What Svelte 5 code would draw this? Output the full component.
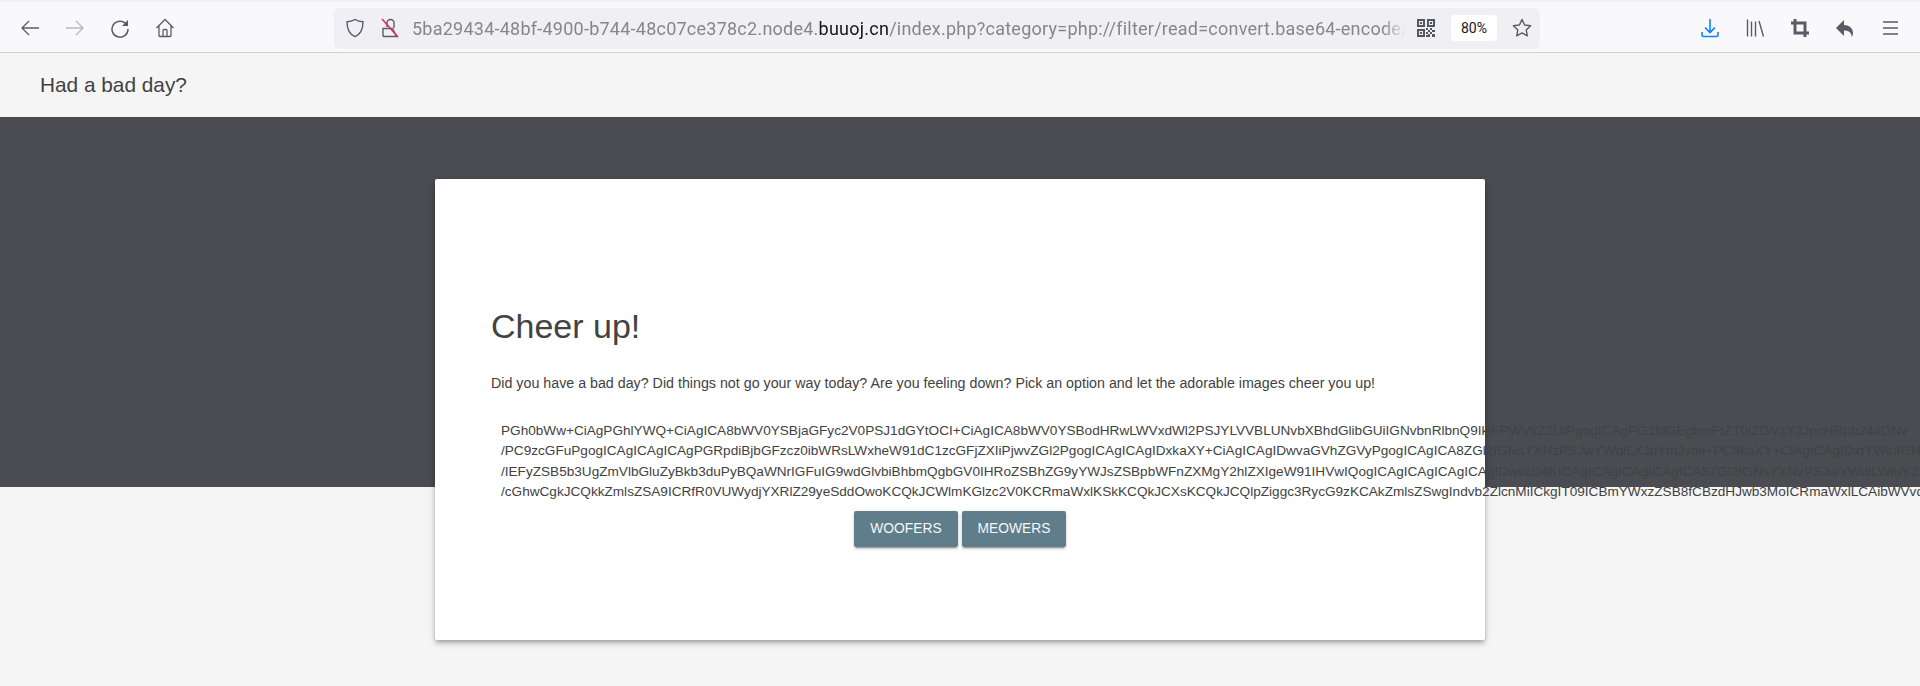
<script lang="ts">
	const urlHost = '5ba29434-48bf-4900-b744-48c07ce378c2.node4.';
	const urlDomain = 'buuoj.cn';
	const urlPath = '/index.php?category=php://filter/read=convert.base64-encode/resource=index';

	// the dumped source, already broken the way the browser wrapped it
	const dump = [
		'PGh0bWw+CiAgPGhlYWQ+CiAgICA8bWV0YSBjaGFyc2V0PSJ1dGYtOCI+CiAgICA8bWV0YSBodHRwLWVxdWl2PSJYLVVBLUNvbXBhdGlibGUiIGNvbnRlbnQ9IklFPWVkZ2UiPgogICAgPG1ldGEgbmFtZT0iZGVzY3JpcHRpb24iIGNv',
		'/PC9zcGFuPgogICAgICAgICAgPGRpdiBjbGFzcz0ibWRsLWxheW91dC1zcGFjZXIiPjwvZGl2PgogICAgICAgIDxkaXY+CiAgICAgIDwvaGVhZGVyPgogICAgICA8ZGl2IGNsYXNzPSJwYWdlLXJpYmJvbiI+PC9kaXY+CiAgICAgIDxtYWluIGN',
		'/IEFyZSB5b3UgZmVlbGluZyBkb3duPyBQaWNrIGFuIG9wdGlvbiBhbmQgbGV0IHRoZSBhZG9yYWJsZSBpbWFnZXMgY2hlZXIgeW91IHVwIQogICAgICAgICAgICAgIDwvcD4KICAgICAgICAgICAgICA8ZGl2IGNsYXNzPSJwYWdlLWluY2x1ZGUiPgo',
		'/cGhwCgkJCQkkZmlsZSA9ICRfR0VUWydjYXRlZ29yeSddOwoKCQkJCWlmKGlzc2V0KCRmaWxlKSkKCQkJCXsKCQkJCQlpZiggc3RycG9zKCAkZmlsZSwgIndvb2ZlcnMiICkgIT09ICBmYWxzZSB8fCBzdHJwb3MoICRmaWxlLCAibWVvd2Vy'
	];
</script>

<div class="toolbar">
	<svg class="icon" viewBox="0 0 20 20" fill="none" stroke="#5b5b66" stroke-width="1.3"><path d="M19 10H2M9 3l-7 7 7 7" /></svg>
	<svg class="icon" viewBox="0 0 20 20" fill="none" stroke="#b9b9bd" stroke-width="1.3"><path d="M1 10h17M11 3l7 7-7 7" /></svg>
	<svg class="icon" viewBox="0 0 20 20" fill="none" stroke="#5b5b66" stroke-width="1.5"><path d="M16.5 6.5A8 8 0 1 0 18 11" /><path d="M18 2v6h-6z" fill="#5b5b66" stroke="none" /></svg>
	<svg class="icon" viewBox="0 0 20 20" fill="none" stroke="#5b5b66" stroke-width="1.3"><path d="M1.5 10 10 1.5l8.500 8.500M4 8v9.500a1 1 0 0 0 1 1h10a1 1 0 0 0 1-1V8M8 18.500V12.500a1 1 0 0 1 1-1h2a1 1 0 0 1 1 1v6" /></svg>

	<div class="urlbar">
		<svg class="icon" viewBox="0 0 20 20" fill="none" stroke="#5b5b66" stroke-width="1.4"><path d="M10 1.500c2.500 1.500 5 2.200 8 2.200 0 7.500-2.500 12.500-8 15-5.500-2.500-8-7.500-8-15 3 0 5.500-.7 8-2.200z" /></svg>
		<svg class="icon lock" viewBox="0 0 20 20" fill="none"><path d="M7 9V5a3.500 3.500 0 0 1 7 0v5M3 10.500h9.500l4 8H4a1 1 0 0 1-1-1z" stroke="#5b5b66" stroke-width="1.4" /><path d="M2 1l16 18" stroke="#e22850" stroke-width="1.6" /></svg>
		<div class="url"><span>{urlHost}</span><b>{urlDomain}</b><span>{urlPath}</span></div>
		<svg class="qr" viewBox="0 0 18 18"><path fill="#55555f" d="M0 0h8v8H0zM10 0h8v8h-8zM0 10h8v8H0zM2 2v4h4V2zM12 2v4h4V2zM2 12v4h4v-4zM3 3h2v2H3zM13 3h2v2h-2zM3 13h2v2H3zM9 9h2v2H9zM11 11h2v2h-2zM13 9h2v2h-2zM15 11h3v2h-3zM9 13h2v2H9zM13 13h2v2h-2zM11 15h2v3h-2zM15 15h3v3h-3zM9 16h2v2H9z" fill-rule="evenodd" /></svg>
		<div class="zoom">80%</div>
		<svg class="icon star" viewBox="0 0 20 20" fill="none" stroke="#5b5b66" stroke-width="1.4" stroke-linejoin="round"><path d="M10 1.500l2.600 5.500 6 .8-4.400 4.100 1.100 5.900-5.300-2.900-5.300 2.900 1.100-5.900L1.400 7.800l6-.8z" /></svg>
	</div>

	<div class="tools">
		<svg class="icon" viewBox="0 0 20 20" fill="none" stroke="#0a84ff" stroke-width="1.600"><path d="M10 1v13M5 9.500l5 5 5-5M2 14v3a1.500 1.500 0 0 0 1.500 1.500h13A1.500 1.500 0 0 0 18 17v-3" /></svg>
		<svg class="icon" viewBox="0 0 20 20" fill="none" stroke="#5b5b66" stroke-width="1.400"><path d="M2.500 1.500v17M6.500 3.500v15M10.500 3.500v15M14 3l4.500 15.500" /></svg>
		<svg class="icon" viewBox="0 0 20 20" fill="none" stroke="#5b5b66" stroke-width="3"><path d="M5 1v14h14M1 5h14v14" /></svg>
		<svg class="icon" viewBox="0 0 20 20"><path fill="#5b5b66" d="M9 2v5c5 0 9 3 9 8 0 1.500-.5 3-1.500 4 .5-4-2.500-6.500-7.500-6.500V18L1 10z" /></svg>
		<svg class="icon" viewBox="0 0 20 20" fill="none" stroke="#5b5b66" stroke-width="1.400"><path d="M3 4h15M3 10h15M3 16h15" /></svg>
	</div>
</div>

<header class="nav">Had a bad day?</header>
<div class="ribbon"></div>

<main class="card">
	<h1>Cheer up!</h1>
	<p>Did you have a bad day? Did things not go your way today? Are you feeling down? Pick an option and let the adorable images cheer you up!</p>
	<div class="dump">
		{#each dump as line}
			<div>{line}</div>
		{/each}
	</div>
	<div class="actions">
		<button>WOOFERS</button>
		<button>MEOWERS</button>
	</div>
</main>

<style>
	:global(body) {
		background: #f5f5f5;
		overflow: hidden;
		height: 686px;
		font-family: 'Liberation Sans', Arial, sans-serif;
		color: #424242;
	}

	.toolbar {
		box-sizing: border-box;
		height: 53px;
		display: flex;
		align-items: center;
		padding: 2px 0 0 20px;
		gap: 25px;
		background: #f9f9fb;
		border-top: 2px solid #f0f0f4;
		border-bottom: 1px solid #cfcfd8;
	}

	.icon {
		width: 20px;
		height: 20px;
		flex: none;
	}

	.urlbar {
		box-sizing: border-box;
		width: 1206px;
		height: 41px;
		margin-left: 134px;
		display: flex;
		align-items: center;
		padding: 0 8px 0 11px;
		background: #f0f0f4;
		border-radius: 6px;
	}

	.lock {
		margin-left: 15px;
	}

	.url {
		flex: 1;
		min-width: 0;
		margin-left: 12px;
		white-space: nowrap;
		overflow: hidden;
		font-family: Roboto, sans-serif;
		font-size: 18px;
		letter-spacing: 0.24px;
		color: #85858c;
		-webkit-mask-image: linear-gradient(to left, transparent, #000 24px);
		mask-image: linear-gradient(to left, transparent, #000 24px);
	}

	.url b {
		font-weight: 400;
		color: #15141a;
	}

	.qr {
		width: 18px;
		height: 18px;
		flex: none;
		margin-left: 11px;
	}

	.zoom {
		width: 46px;
		height: 26px;
		margin-left: 16px;
		border-radius: 4px;
		background: #fff;
		color: #15141a;
		font-family: Roboto, sans-serif;
		font-size: 14px;
		line-height: 26px;
		text-align: center;
	}

	.star {
		margin-left: 15px;
	}

	.tools {
		display: flex;
		gap: 25px;
		margin-left: 135px;
	}

	.nav {
		height: 64px;
		padding-left: 40px;
		font-size: 20.8px;
		line-height: 64px;
	}

	.ribbon {
		height: 370px;
		background: #4a4c52;
	}

	.card {
		box-sizing: border-box;
		width: 1050px;
		height: 461px;
		margin: -308px 0 0 435px;
		padding: 123px 56px 0;
		background: #fff;
		border-radius: 2px;
		box-shadow: 0 4px 5px 0 rgba(0, 0, 0, 0.14), 0 1px 10px 0 rgba(0, 0, 0, 0.12), 0 2px 4px -1px rgba(0, 0, 0, 0.2);
	}

	h1 {
		margin: 0;
		font-size: 34px;
		font-weight: 400;
		line-height: 48px;
	}

	p {
		margin: 23px 0 0;
		font-size: 14.25px;
		line-height: 20px;
		white-space: nowrap;
	}

	.dump {
		margin: 28px 0 0 10px;
		font-size: 13.6px;
		line-height: 20.48px;
		white-space: nowrap;
	}

	.actions {
		display: flex;
		justify-content: center;
		gap: 4px;
		margin-top: 8px;
	}

	button {
		box-sizing: border-box;
		width: 104px;
		height: 36px;
		padding: 0;
		border: 0;
		border-radius: 2px;
		background: #607d8b;
		color: #f2f7fa;
		font-family: inherit;
		font-size: 13.8px;
		box-shadow: 0 2px 2px 0 rgba(0, 0, 0, 0.14), 0 3px 1px -2px rgba(0, 0, 0, 0.2), 0 1px 5px 0 rgba(0, 0, 0, 0.12);
	}
</style>
